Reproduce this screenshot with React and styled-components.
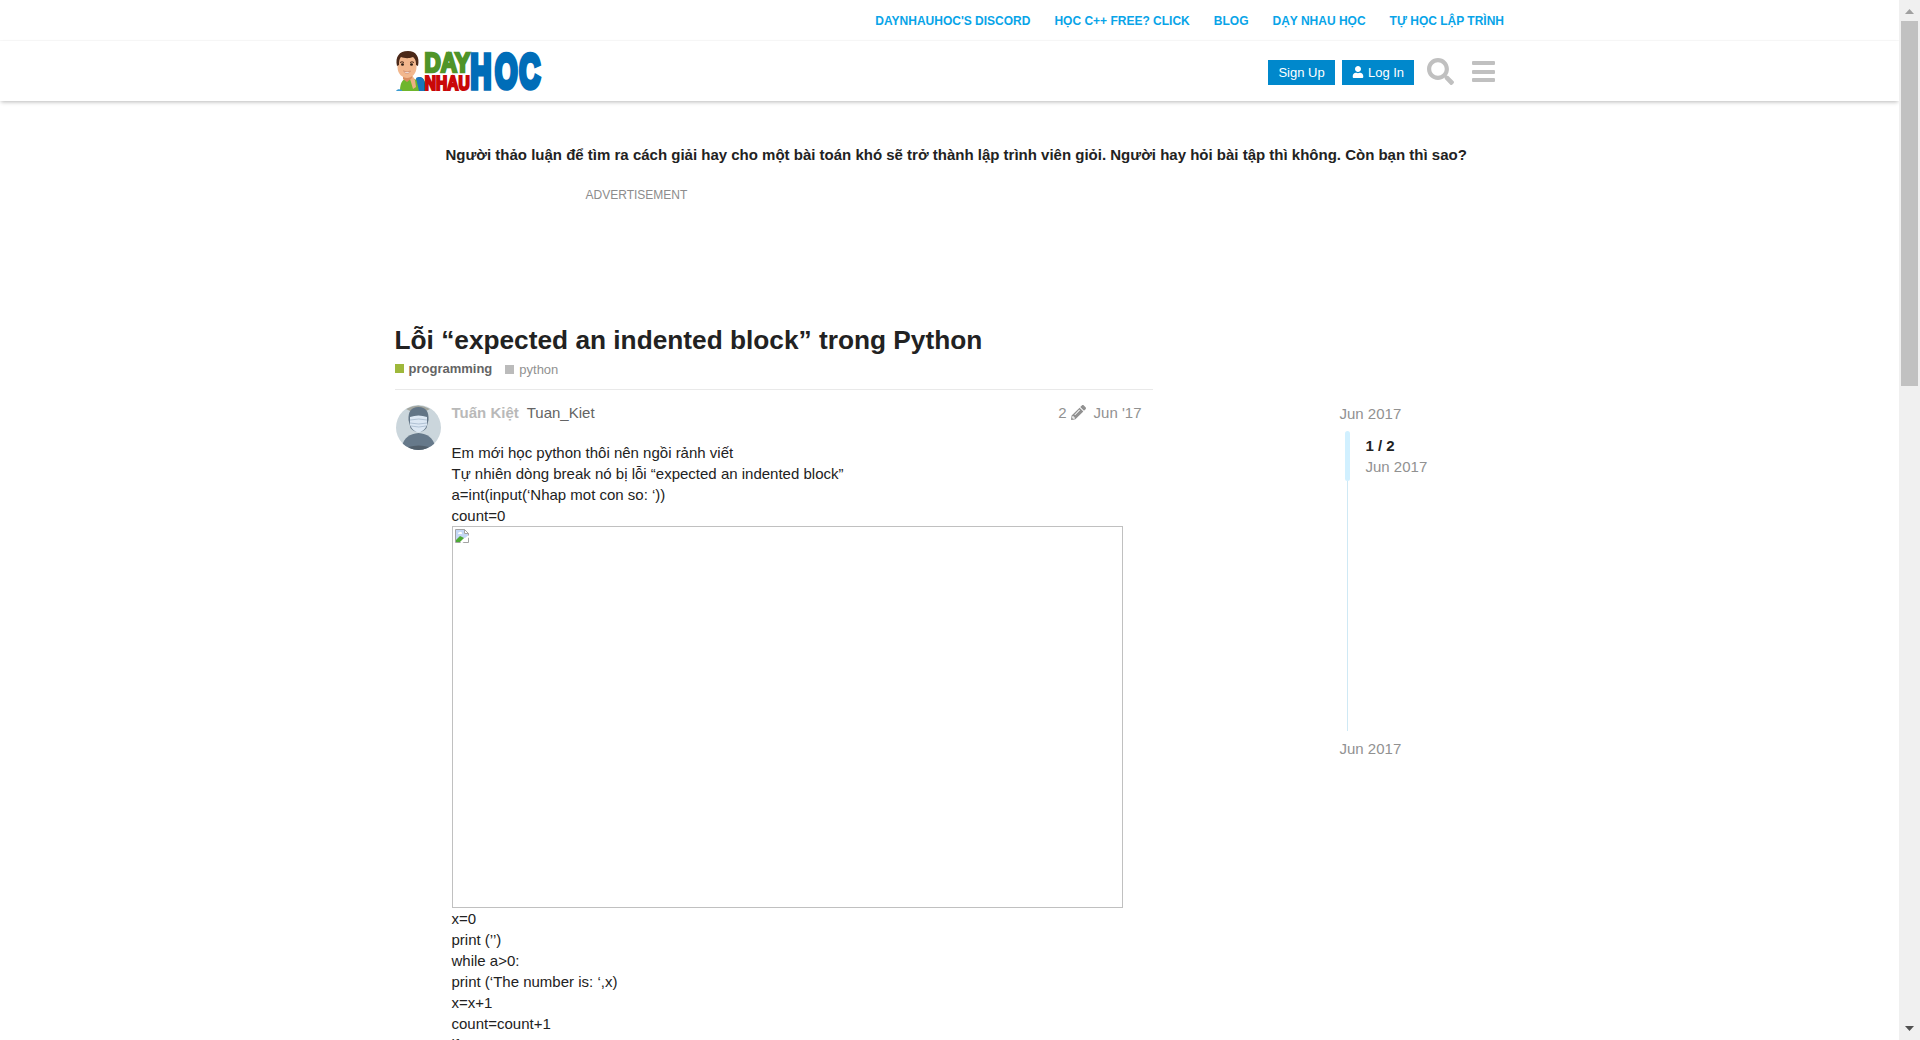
import React from 'react';
import styled, { createGlobalStyle } from 'styled-components';
import { FaSearch, FaUser, FaPencilAlt } from 'react-icons/fa';

const GlobalStyle = createGlobalStyle`
  * { box-sizing: border-box; }
  html, body { margin: 0; height: 1040px; overflow: hidden; background: #fff; }
  body { font-family: "Liberation Sans", Arial, sans-serif; font-size: 15px; line-height: 21px; color: #222; }
`;

const Window = styled.div`
  display: flex;
  width: 1920px;
  height: 1040px;
  overflow: hidden;
`;
const Page = styled.div`
  flex: 1;
  height: 1040px;
  overflow: hidden;
`;
const Container = styled.div`
  width: 1110px;
  margin-left: 394.5px;
`;
const TopBar = styled.nav`
  height: 41px;
  border-bottom: 1px solid #f9f9f9;
`;
const TopLinks = styled(Container)`
  display: flex;
  justify-content: flex-end;
  gap: 24px;
  padding: 11px 0.5px 0 0;
`;
const TopLink = styled.a`
  font-size: 12px;
  font-weight: bold;
  color: #08a4e8;
  white-space: nowrap;
`;
const Header = styled.header`
  height: 60px;
  box-shadow: 0 2px 4px -1px rgba(0, 0, 0, 0.28);
`;
const HeaderRow = styled(Container)`
  display: flex;
  justify-content: space-between;
  padding: 9px 9.5px 0 0.5px;
`;
const LogoArt = styled.svg`
  display: block;
  overflow: visible;
`;
const Actions = styled.div`
  display: flex;
  align-items: flex-start;
  padding-top: 10px;
`;
const Button = styled.button`
  display: flex;
  align-items: center;
  justify-content: center;
  gap: 4px;
  width: ${(p) => p.$width}px;
  height: 25px;
  margin: 0 7px 0 0;
  padding: 0 0 1px;
  border: 0;
  background: #0088cc;
  color: #fff;
  font: 13px "Liberation Sans", Arial, sans-serif;
`;
const SearchIcon = styled(FaSearch)`
  width: 27px;
  height: 27px;
  margin: -2px 18px 0 6px;
  color: #c0c0c0;
`;
const Menu = styled.div`
  display: grid;
  gap: 4.5px;
  width: 23px;
  padding-top: 1px;
`;
const MenuBar = styled.span`
  height: 4px;
  border-radius: 1px;
  background: #c0c0c0;
`;
const Notice = styled.p`
  margin: 0;
  padding: 43px 0 0 51px;
  font-weight: bold;
  white-space: nowrap;
`;
const AdLabel = styled.div`
  height: 157px;
  padding: 20px 0 0 191px;
  font-size: 12px;
  line-height: 20px;
  color: #8c8c8c;
`;
const Title = styled.h1`
  margin: 0;
  font-size: 26.25px;
  line-height: 36px;
  white-space: nowrap;
`;
const Tags = styled.div`
  display: flex;
  gap: 13px;
  height: 31px;
`;
const Tag = styled.span`
  display: flex;
  align-items: center;
  gap: 5px;
  height: 20px;
  margin-top: ${(p) => p.$drop || 0}px;
  font-size: 13px;
  font-weight: ${(p) => p.$weight};
  color: ${(p) => p.$color};
`;
const Swatch = styled.i`
  width: 9px;
  height: 9px;
  background: ${(p) => p.$color};
`;
const Columns = styled.div`
  display: flex;
`;
const Post = styled.article`
  display: flex;
  gap: 11px;
  width: 758px;
  padding: 14px 11px 0 1px;
  border-top: 1px solid #e9e9e9;
`;
const AvatarFrame = styled.div`
  width: 45px;
  height: 45px;
  margin-top: 1px;
  border-radius: 50%;
  overflow: hidden;
  svg { display: block; }
`;
const PostMain = styled.div`
  flex: 1;
`;
const Meta = styled.div`
  display: flex;
  height: 38px;
  line-height: 17px;
  color: #919191;
`;
const Author = styled.span`
  margin-right: 8px;
  font-weight: bold;
  color: #b9b9b9;
`;
const Username = styled.span`
  flex: 1;
  color: #646464;
`;
const Pencil = styled(FaPencilAlt)`
  width: 15px;
  height: 15px;
  margin: 1px 8px 0 4px;
`;
const Line = styled.div`
  height: 21px;
  white-space: nowrap;
`;
const MissingImage = styled.div`
  width: 671px;
  height: 382px;
  padding: 1px;
  border: 1px solid #c0c0c0;
  svg { display: block; }
`;
const Timeline = styled.aside`
  width: 120px;
  margin-left: 187px;
  padding-top: 14px;
  color: #919191;
`;
const Scroller = styled.div`
  display: flex;
  align-items: flex-start;
  height: 300px;
  margin: 7px 0 7px 5.5px;
`;
const Track = styled.div`
  display: flex;
  flex-direction: column;
  align-items: center;
  width: 5px;
  height: 300px;
`;
const Handle = styled.div`
  width: 5px;
  height: 50px;
  border-radius: 3px;
  background: #d1f0ff;
`;
const Rail = styled.div`
  width: 1px;
  flex: 1;
  background: #cfe9f5;
`;
const Position = styled.div`
  padding: 4px 0 0 15.5px;
  b { display: block; color: #222; }
`;
const Scrollbar = styled.div`
  display: flex;
  flex-direction: column;
  justify-content: space-between;
  align-items: center;
  width: 21px;
  height: 1040px;
  padding: 9px 0;
  background: #f0f0f0;
  position: relative;
`;
const Thumb = styled.div`
  width: 17px;
  height: 365px;
  margin: 7px 0 auto;
  background: #c1c1c1;
`;
const Arrow = styled.svg`
  display: block;
`;

const links = ["DAYNHAUHOC'S DISCORD", 'HỌC C++ FREE? CLICK', 'BLOG', 'DẠY NHAU HỌC', 'TỰ HỌC LẬP TRÌNH'];
const before = [
  'Em mới học python thôi nên ngồi rảnh viết',
  'Tự nhiên dòng break nó bị lỗi “expected an indented block”',
  'a=int(input(‘Nhap mot con so: ‘))',
  'count=0',
];
const after = ['x=0', 'print (’’)', 'while a>0:', 'print (‘The number is: ‘,x)', 'x=x+1', 'count=count+1', 'if count'];

function Logo() {
  return (
    <LogoArt width="150" height="44" viewBox="395 50 150 44" fontFamily="Liberation Sans, Arial, sans-serif" fontWeight="bold">
      <ellipse cx="420" cy="84" rx="5" ry="7" fill="#1763a8" />
      <path d="M400 91c0-9 3-13 9-13 8 0 11 4 13 13z" fill="#6fb62c" />
      <path d="M396 91c1-2 4-2 6-1v1z" fill="#3b9bd0" />
      <path d="M416 78c5-3 9 2 9 7v6h-6z" fill="#1976bd" />
      <path d="M411 82l-2-6 3-1 3 5 1 7-3 2z" fill="#edb083" />
      <path d="M403 74h9v4l-5 4-4-3z" fill="#d98d61" />
      <path d="M397.500 60c0-5 19-5 19 0v7c0 7-5 11-9.500 11s-9.500-4-9.500-11z" fill="#f2b78d" />
      <path d="M397 66c-2-9 2-15 11-15 8 0 12 6 10 15l-2-1c0-5-1-6-3-8-5 2-9 1-12 0-2 2-2 5-2 8z" fill="#4a2818" />
      <path d="M400 62.500q2-1.500 4 0M410 62.500q2-1.500 4 0" stroke="#4a2818" fill="none" />
      <ellipse cx="402.500" cy="64.500" rx="1.500" ry="1.200" fill="#302016" />
      <ellipse cx="411.500" cy="64.500" rx="1.500" ry="1.200" fill="#302016" />
      <path d="M403.500 71q4 2 7 0-3 5-7 0" fill="#fff" stroke="#b66446" strokeWidth=".5" />
      <g strokeLinejoin="miter">
        <text transform="translate(424.500 72.200) scale(.74 1.080)" fontSize="25.500" textLength="61.500" lengthAdjust="spacingAndGlyphs" fill="#4f9428" stroke="#4f9428" strokeWidth="2.500">DAY</text>
        <text transform="translate(424.800 89.600) scale(.7 1)" fontSize="19.500" textLength="64" lengthAdjust="spacingAndGlyphs" fill="#c90808" stroke="#c90808" strokeWidth="2.200">NHAU</text>
        <text transform="translate(470.600 88.400) scale(.59 1)" x="0 41.500 82.500" fontSize="49" fill="#006db8" stroke="#006db8" strokeWidth="5.500">HOC</text>
      </g>
    </LogoArt>
  );
}

function Avatar() {
  return (
    <AvatarFrame>
      <svg width="45" height="45" viewBox="0 0 45 45">
        <rect width="45" height="45" fill="#cbd6dc" />
        <path d="M10 4Q22-3 34 4L30 6H14z" fill="#a3a69f" />
        <path d="M12.500 15C12 7 15 2 22.500 2S33 7 32.500 15l-1 4-1 4q-3 4-8 4t-8-4l-1-4z" fill="#627586" />
        <path d="M14 12q8.500-3 17 0v8q-3 7-8.500 7.500Q17 27 14 20z" fill="#dce8f4" />
        <path d="M14 15q9-2 17 0M14 18q9 2 17 0M15 21q8 2 15 0" stroke="#a5b8cc" strokeWidth=".8" fill="none" />
        <path d="M6 41q3-12 16.500-13Q36 29 39 41l-8 5H14z" fill="#66798a" />
        <path d="M12 42q11-3 21 0l-5 3H17z" fill="#515f6b" />
      </svg>
    </AvatarFrame>
  );
}

function BrokenIcon() {
  return (
    <svg width="16" height="16" viewBox="0 0 16 16">
      <path d="M1.500 1.500h9l4 4v9h-13z" fill="#fff" stroke="#a3a3a3" />
      <path d="M2 2h8v4h4v3L2 13z" fill="#c4d7f5" />
      <path d="M4 6q0-2 2-2 2-1 2 2z" fill="#fff" />
      <path d="M2 14v-2l4-4 4 2-4 4z" fill="#4caa35" />
      <path d="M10.500 1.500v4h4z" fill="#fff" stroke="#a3a3a3" />
      <path d="M7 15l8-7" stroke="#fff" strokeWidth="2" />
    </svg>
  );
}

export default function App() {
  return (
    <Window>
      <GlobalStyle />
      <Page>
        <TopBar>
          <TopLinks>
            {links.map((label) => <TopLink key={label}>{label}</TopLink>)}
          </TopLinks>
        </TopBar>
        <Header>
          <HeaderRow>
            <Logo />
            <Actions>
              <Button $width={67}>Sign Up</Button>
              <Button $width={72}><FaUser size={12} />Log In</Button>
              <SearchIcon />
              <Menu><MenuBar /><MenuBar /><MenuBar /></Menu>
            </Actions>
          </HeaderRow>
        </Header>
        <Container>
          <Notice>Người thảo luận để tìm ra cách giải hay cho một bài toán khó sẽ trở thành lập trình viên giỏi. Người hay hỏi bài tập thì không. Còn bạn thì sao?</Notice>
          <AdLabel>ADVERTISEMENT</AdLabel>
          <Title>Lỗi “expected an indented block” trong Python</Title>
          <Tags>
            <Tag $weight="bold" $color="#646464"><Swatch $color="#9eb83b" />programming</Tag>
            <Tag $weight="normal" $color="#919191" $drop={1}><Swatch $color="#bbb" />python</Tag>
          </Tags>
          <Columns>
            <Post>
              <Avatar />
              <PostMain>
                <Meta>
                  <Author>Tuấn Kiệt</Author>
                  <Username>Tuan_Kiet</Username>
                  <span>2</span>
                  <Pencil />
                  <span>Jun '17</span>
                </Meta>
                {before.map((t) => <Line key={t}>{t}</Line>)}
                <MissingImage><BrokenIcon /></MissingImage>
                {after.map((t) => <Line key={t}>{t}</Line>)}
              </PostMain>
            </Post>
            <Timeline>
              <div>Jun 2017</div>
              <Scroller>
                <Track><Handle /><Rail /></Track>
                <Position><b>1 / 2</b>Jun 2017</Position>
              </Scroller>
              <div>Jun 2017</div>
            </Timeline>
          </Columns>
        </Container>
      </Page>
      <Scrollbar>
        <Arrow width="9" height="5" viewBox="0 0 9 5"><path d="M0 5L4.500 0 9 5z" fill="#a0a0a0" /></Arrow>
        <Thumb />
        <Arrow width="9" height="5" viewBox="0 0 9 5"><path d="M0 0L4.500 5 9 0z" fill="#505050" /></Arrow>
      </Scrollbar>
    </Window>
  );
}
